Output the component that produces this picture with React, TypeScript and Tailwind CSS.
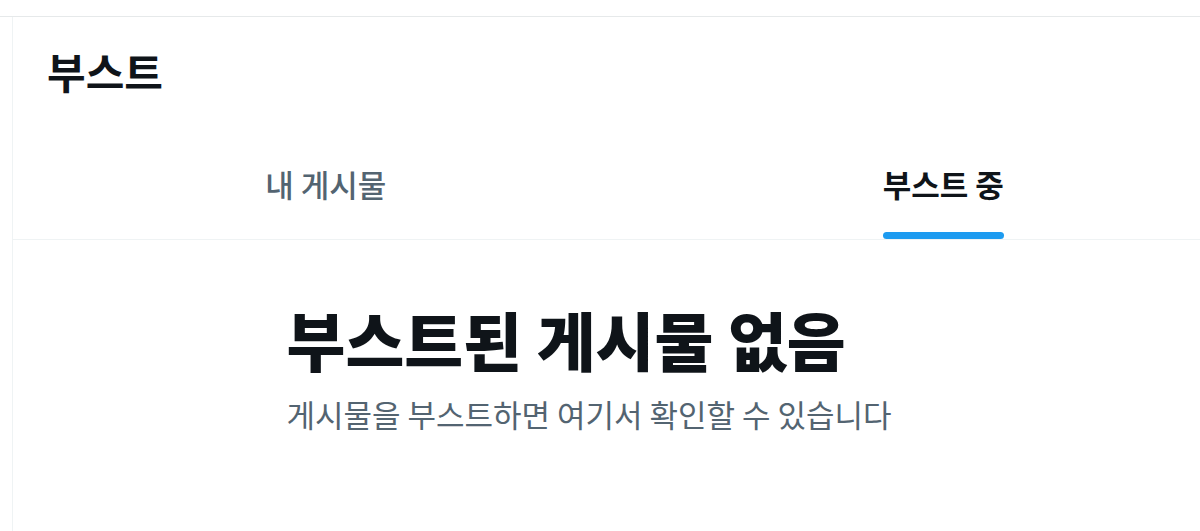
import React from 'react';

const font = { fontFamily: '"Noto Sans CJK KR", "Noto Sans", sans-serif' };

const App: React.FC = () => {
  return (
    <div className="h-[531px] w-[1200px] overflow-hidden bg-white text-[#0f1419]" style={font}>
      <div className="h-[17px] border-b border-[#e6e9ea]" />
      <div className="ml-[12px] w-[1240px] h-[514px] border-l border-[#eff3f4]">
        <div className="h-[129px] pl-[34px] pt-[28px]">
          <h1 className="text-[42px] font-bold leading-[52px]">부스트</h1>
        </div>
        <div className="flex border-b border-[#eff3f4] pl-[4px]">
          <div className="flex-1 flex justify-center">
            <div className="relative h-[93px] flex items-start pt-[18px]">
              <span className="text-[31px] font-medium leading-[40px] text-[#536471]">내 게시물</span>
            </div>
          </div>
          <div className="flex-1 flex justify-center">
            <div className="relative h-[93px] flex items-start pt-[18px]">
              <span className="text-[31px] font-bold leading-[40px]">부스트 중</span>
              <div className="absolute bottom-0 left-0 right-0 h-[7px] rounded-full bg-[#1d9bf0]" />
            </div>
          </div>
        </div>
        <div className="mx-auto w-[692px] pt-[58px]">
          <h2 className="text-[64px] font-extrabold leading-[80px]">부스트된 게시물 없음</h2>
          <p className="mt-[16px] text-[31px] leading-[40px] text-[#536471]">게시물을 부스트하면 여기서 확인할 수 있습니다</p>
        </div>
      </div>
    </div>
  );
};

export default App;
